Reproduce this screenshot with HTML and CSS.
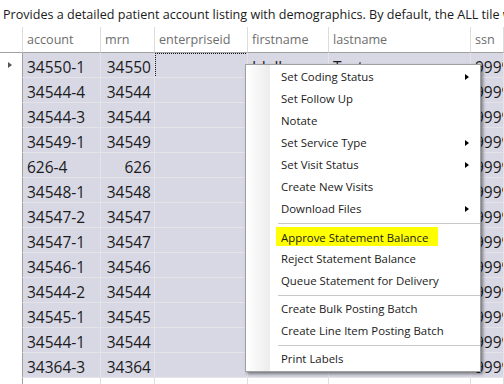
FILE: index.html
```html
<!DOCTYPE html>
<html>
<head>
<meta charset="utf-8">
<link rel="stylesheet" href="styles.css">
</head>
<body>
<div class="page">
  <div class="title">Provides a detailed patient account listing with demographics. By default, the ALL tile will show all patients.</div>
  <div class="grid">
    <div class="row head">
      <div class="c c0"></div>
      <div class="c c1">account</div>
      <div class="c c2 l">mrn</div>
      <div class="c c3">enterpriseid</div>
      <div class="c c4">firstname</div>
      <div class="c c5">lastname</div>
      <div class="c c6">ssn</div>
    </div>
    <div class="row sel">
      <div class="c c0"><span class="cur"></span></div>
      <div class="c c1">34550-1</div><div class="c c2">34550</div><div class="c c3"><span class="focus"></span></div><div class="c c4">Idalk</div><div class="c c5">Test</div><div class="c c6">999999999</div>
    </div>
    <div class="row sel"><div class="c c0"></div><div class="c c1">34544-4</div><div class="c c2">34544</div><div class="c c3"></div><div class="c c4"></div><div class="c c5"></div><div class="c c6">999999999</div></div>
    <div class="row sel"><div class="c c0"></div><div class="c c1">34544-3</div><div class="c c2">34544</div><div class="c c3"></div><div class="c c4"></div><div class="c c5"></div><div class="c c6">999999999</div></div>
    <div class="row sel"><div class="c c0"></div><div class="c c1">34549-1</div><div class="c c2">34549</div><div class="c c3"></div><div class="c c4"></div><div class="c c5"></div><div class="c c6">999999999</div></div>
    <div class="row sel"><div class="c c0"></div><div class="c c1">626-4</div><div class="c c2">626</div><div class="c c3"></div><div class="c c4"></div><div class="c c5"></div><div class="c c6">999999999</div></div>
    <div class="row sel"><div class="c c0"></div><div class="c c1">34548-1</div><div class="c c2">34548</div><div class="c c3"></div><div class="c c4"></div><div class="c c5"></div><div class="c c6">999999999</div></div>
    <div class="row sel"><div class="c c0"></div><div class="c c1">34547-2</div><div class="c c2">34547</div><div class="c c3"></div><div class="c c4"></div><div class="c c5"></div><div class="c c6">999999999</div></div>
    <div class="row sel"><div class="c c0"></div><div class="c c1">34547-1</div><div class="c c2">34547</div><div class="c c3"></div><div class="c c4"></div><div class="c c5"></div><div class="c c6">999999999</div></div>
    <div class="row sel"><div class="c c0"></div><div class="c c1">34546-1</div><div class="c c2">34546</div><div class="c c3"></div><div class="c c4"></div><div class="c c5"></div><div class="c c6">999999999</div></div>
    <div class="row sel"><div class="c c0"></div><div class="c c1">34544-2</div><div class="c c2">34544</div><div class="c c3"></div><div class="c c4"></div><div class="c c5"></div><div class="c c6">999999999</div></div>
    <div class="row sel"><div class="c c0"></div><div class="c c1">34545-1</div><div class="c c2">34545</div><div class="c c3"></div><div class="c c4"></div><div class="c c5"></div><div class="c c6">999999999</div></div>
    <div class="row sel"><div class="c c0"></div><div class="c c1">34544-1</div><div class="c c2">34544</div><div class="c c3"></div><div class="c c4"></div><div class="c c5"></div><div class="c c6">999999999</div></div>
    <div class="row sel"><div class="c c0"></div><div class="c c1">34364-3</div><div class="c c2">34364</div><div class="c c3"></div><div class="c c4"></div><div class="c c5"></div><div class="c c6">999999999</div></div>
    <div class="row"><div class="c c0"></div><div class="c c1"></div><div class="c c2"></div><div class="c c3"></div><div class="c c4"></div><div class="c c5"></div><div class="c c6"></div></div>
  </div>

  <div class="menu">
    <div class="item sub">Set Coding Status</div>
    <div class="item">Set Follow Up</div>
    <div class="item">Notate</div>
    <div class="item sub">Set Service Type</div>
    <div class="item sub">Set Visit Status</div>
    <div class="item">Create New Visits</div>
    <div class="item sub">Download Files</div>
    <div class="sep"></div>
    <div class="item"><span class="hl">Approve Statement Balance</span></div>
    <div class="item">Reject Statement Balance</div>
    <div class="item">Queue Statement for Delivery</div>
    <div class="sep"></div>
    <div class="item">Create Bulk Posting Batch</div>
    <div class="item">Create Line Item Posting Batch</div>
    <div class="sep"></div>
    <div class="item">Print Labels</div>
  </div>
</div>
</body>
</html>
```
FILE: styles.css
```css
html, body {
  margin: 0;
  padding: 0;
  background: #ffffff;
}
body {
  width: 504px;
  height: 384px;
  overflow: hidden;
  font-family: "Open Sans", "Noto Sans", sans-serif;
  color: #1e1e1e;
}
.page {
  position: relative;
  width: 504px;
  height: 384px;
  overflow: hidden;
}
.title {
  height: 27px;
  line-height: 29px;
  padding-left: 3px;
  font-size: 12.6px;
  white-space: nowrap;
  overflow: hidden;
  color: #1a1a1a;
}
.grid {
  display: flex;
  flex-direction: column;
}
.row {
  display: flex;
  height: 25px;
  flex: none;
}
.row.head {
  height: 26px;
}
.c {
  box-sizing: border-box;
  height: 100%;
  border-right: 1px solid #dedede;
  border-bottom: 1px solid #dedede;
  white-space: nowrap;
  overflow: hidden;
  font-size: 15.5px;
  line-height: 22px;
  padding-top: 3px;
  padding-left: 4px;
  color: #1b1b1b;
  position: relative;
}
.c0 { width: 23px; padding: 0; border-right-color: #a0a0a0; border-bottom-color: #ffffff; background: #fff; }
.c1 { width: 78px; }
.c2 { width: 54px; text-align: right; padding-left: 0; padding-right: 3px; }
.c3 { width: 93px; }
.c4 { width: 81px; }
.c5 { width: 142px; }
.c6 { flex: 1; }

.head .c {
  font-size: 12.6px;
  color: #6d6d6d;
  line-height: 26px;
  padding-top: 0;
  background: #fff;
  border-right-color: #dcdcdc;
  border-bottom: 1px solid #a0a0a0;
}
.head .c2.l { text-align: left; padding-left: 4px; }
.head .c0 { border-right-color: #dcdcdc; border-bottom-color: #a0a0a0; }

.sel .c { background: #d8d8e5; border-color: #e3e3e8; }
.sel .c0 { background: #fff; border-right-color: #a0a0a0; border-bottom-color: #ffffff; }
.row:last-child .c0 { border-right-color: #a0a0a0; border-bottom-color: #fff; }

.cur {
  position: absolute;
  left: 8px;
  top: 9px;
  width: 0;
  height: 0;
  border-top: 3.5px solid transparent;
  border-bottom: 3.5px solid transparent;
  border-left: 4px solid #555;
}
.focus {
  position: absolute;
  left: 0;
  top: 0;
  right: -1px;
  bottom: -1px;
  border: 1px dotted #111;
}

.menu {
  position: absolute;
  left: 245px;
  top: 64px;
  width: 234px;
  padding: 1px 0;
  background: linear-gradient(to right, #ffffff 0, #ececec 24px, #ffffff 24px, #ffffff 100%);
  border: 1px solid #a0a0a0;
  box-shadow: 2px 2px 3px rgba(0, 0, 0, 0.45);
  font-size: 11.4px;
  color: #1a1a1a;
}
.item {
  position: relative;
  height: 22px;
  line-height: 22px;
  padding-left: 35px;
  white-space: nowrap;
}
.item.sub::after {
  content: "";
  position: absolute;
  right: 11px;
  top: 7.5px;
  width: 0;
  height: 0;
  border-top: 3.5px solid transparent;
  border-bottom: 3.5px solid transparent;
  border-left: 4px solid #000;
}
.sep {
  height: 6px;
  display: flex;
  align-items: center;
  padding-left: 32px;
}
.sep::before {
  content: "";
  display: block;
  width: 100%;
  height: 1px;
  background: #c8c8c8;
}
.hl {
  display: inline-block;
  background: #ffff00;
  height: 19px;
  line-height: 21px;
  margin-left: -5px;
  padding: 0 10px 0 5px;
  vertical-align: top;
  margin-top: 1px;
}
```
